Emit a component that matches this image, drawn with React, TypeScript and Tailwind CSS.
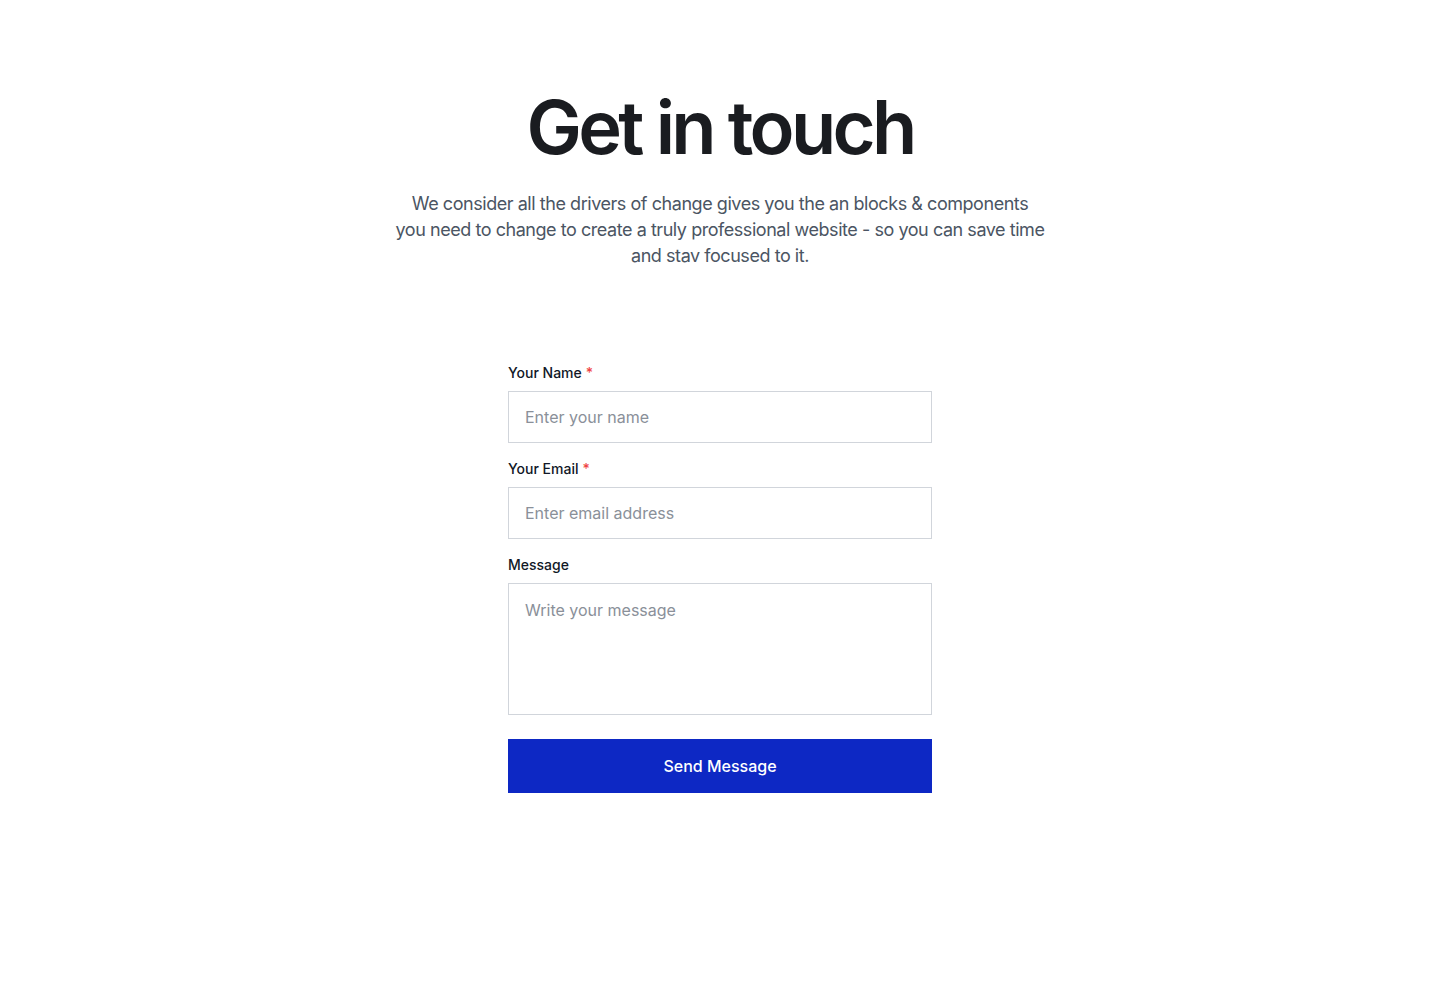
import React from "react";

function Label({ text, required }: { text: string; required?: boolean }) {
  return (
    <label className="mb-2 block text-[14px] leading-5 font-medium text-[#111827]">
      {text}
      {required && <span className="ml-1 text-[#ef4444]">*</span>}
    </label>
  );
}

export default function App() {
  return (
    <div
      className="min-h-[1000px] w-full bg-white"
      style={{ fontFamily: "Inter, 'Noto Sans', sans-serif" }}
    >
      <section className="flex flex-col items-center pt-[87px]">
        <h1 className="text-[74px] leading-[80px] font-semibold tracking-[-0.05em] text-[#1a1c20]">
          Get in touch
        </h1>
        <p className="mt-[24px] w-[700px] text-center text-[18px] leading-[26px] tracking-[-0.025em] text-[#4b5563]">
          We consider all the drivers of change gives you the an blocks &amp; components
          <br />
          you need to change to create a truly professional website - so you can save time
          <br />
          and stav focused to it.
        </p>

        <form className="mt-[94px] flex w-[424px] flex-col" onSubmit={(e) => e.preventDefault()}>
          <Label text="Your Name" required />
          <input
            type="text"
            placeholder="Enter your name"
            className="h-[52px] w-full border border-[#d1d5db] px-4 text-[16px] text-[#111827] outline-none placeholder:text-[#8a9099]"
          />
          <div className="mt-4">
            <Label text="Your Email" required />
          </div>
          <input
            type="email"
            placeholder="Enter email address"
            className="h-[52px] w-full border border-[#d1d5db] px-4 text-[16px] text-[#111827] outline-none placeholder:text-[#8a9099]"
          />
          <div className="mt-4">
            <Label text="Message" />
          </div>
          <textarea
            placeholder="Write your message"
            className="h-[132px] w-full resize-none border border-[#d1d5db] px-4 py-[14px] text-[16px] leading-6 text-[#111827] outline-none placeholder:text-[#8a9099]"
          />
          <button
            type="submit"
            className="mt-6 h-[54px] w-full bg-[#0d28c4] text-[16px] font-medium text-white"
          >
            Send Message
          </button>
        </form>
      </section>
    </div>
  );
}
